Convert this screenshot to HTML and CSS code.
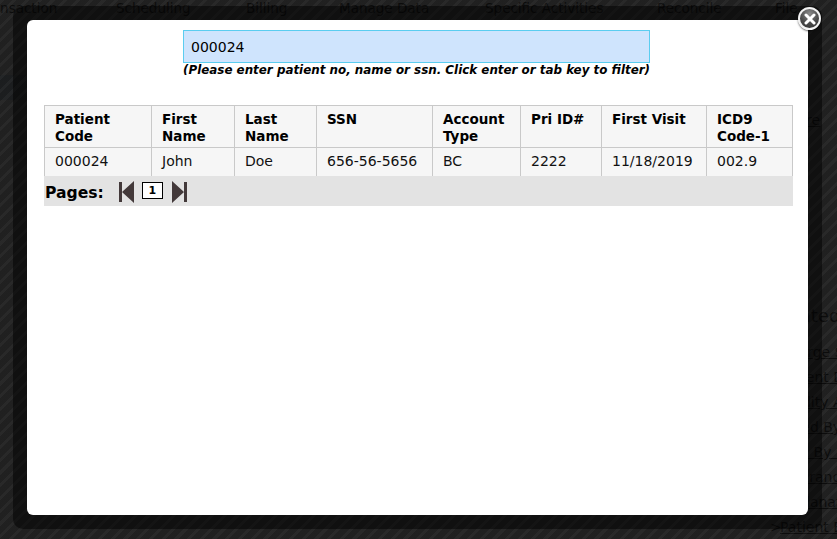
FILE: index.html
```html
<!DOCTYPE html>
<html lang="en">
<head>
<meta charset="utf-8">
<title>Patient search</title>
<link rel="stylesheet" href="styles.css">
</head>
<body>
<div class="page">
  <nav class="topnav">
    <span>Transaction</span><span>Scheduling</span><span>Billing</span><span>Manage Data</span><span>Specific Activities</span><span>Reconcile</span><span>File</span>
  </nav>
  <div class="band"></div>
  <aside class="side">
    <a class="pic">Picture</a>
    <h3>Related</h3>
    <ul>
      <li><a>Charge Summary</a></li>
      <li><a>Patient Details</a></li>
      <li><a>Facility Activity</a></li>
      <li><a>Billed By Date</a></li>
      <li><a>Paid By Date</a></li>
      <li><a>Insurance</a></li>
      <li><a>Explanation</a></li>
      <li><a>Patient Balance</a></li>
    </ul>
  </aside>
</div>
<div class="overlay"></div>
<div class="frame">
  <main class="modal">
    <div class="filter">
      <input class="search" type="text" value="000024">
      <p class="hint">(Please enter patient no, name or ssn. Click enter or tab key to filter)</p>
    </div>
    <table class="grid">
      <colgroup>
        <col class="c1"><col class="c2"><col class="c3"><col class="c4"><col class="c5"><col class="c6"><col class="c7"><col class="c8">
      </colgroup>
      <thead>
        <tr><th>Patient Code</th><th>First Name</th><th>Last Name</th><th>SSN</th><th>Account Type</th><th>Pri ID#</th><th>First Visit</th><th>ICD9 Code-1</th></tr>
      </thead>
      <tbody>
        <tr><td>000024</td><td>John</td><td>Doe</td><td>656-56-5656</td><td>BC</td><td>2222</td><td>11/18/2019</td><td>002.9</td></tr>
      </tbody>
    </table>
    <div class="pager">
      <span class="pages-label">Pages:</span>
      <svg class="arrow" width="15" height="22" viewBox="0 0 15 22"><path d="M0 1h3v20H0zM3 11 15 0v22z"/></svg>
      <span class="pagenum">1</span>
      <svg class="arrow" width="15" height="22" viewBox="0 0 15 22"><path d="M15 1h-3v20h3zM12 11 0 0v22z"/></svg>
    </div>
  </main>
  <button class="close" aria-label="Close">
    <svg width="12" height="12" viewBox="0 0 12 12"><path d="M2 2l8 8M10 2l-8 8"/></svg>
  </button>
</div>
</body>
</html>
```
FILE: styles.css
```css
* { box-sizing: border-box; }
html, body { margin: 0; height: 100%; overflow: hidden; }
body { font-family: "DejaVu Sans", Verdana, sans-serif; background: #fff; position: relative; }

.page { width: 837px; height: 539px; overflow: hidden; position: relative; color: #000; background: #fff; }
.topnav { display: flex; height: 18px; font-size: 13.5px; line-height: 17px; white-space: nowrap; margin-left: -20px; }
.topnav span:nth-child(1) { width: 136px; }
.topnav span:nth-child(2) { width: 130px; }
.topnav span:nth-child(3) { width: 93px; }
.topnav span:nth-child(4) { width: 146px; }
.topnav span:nth-child(5) { width: 172px; }
.topnav span:nth-child(6) { width: 118px; }
.band { height: 25px; margin-top: 57px; width: 27px; background: #c5dcef; }
.side { position: absolute; left: 770px; top: 112px; width: 200px; font-size: 14px; white-space: nowrap; }
.pic { display: block; padding-left: 2px; text-decoration: underline; color: #000; }
.side h3 { margin: 176px 0 12px; padding-left: 2px; font-size: 18px; font-weight: normal; line-height: 24px; }
.side ul { list-style: none; margin: 0; padding: 0; }
.side li { height: 25px; line-height: 25px; padding-left: 10px; position: relative; }
.side li::before { content: ">"; position: absolute; left: 0; }
.side li a { text-decoration: underline; }

.overlay {
  position: absolute; inset: 0;
  background-image: repeating-linear-gradient(135deg, #161616 0 3px, #0d0d0d 3px 9px);
  opacity: .92;
}
.frame {
  position: absolute; left: 13px; top: 6px; width: 809px; height: 523px;
  padding: 14px;
  border-radius: 10px;
  background: rgba(0, 0, 0, .5);
}
.modal { background: #fff; height: 495px; border-radius: 6px; padding: 10px 15px 0 17px; color: #000; }
.filter { width: 467px; margin-left: 139px; }
.search {
  display: block; width: 100%; height: 33px; padding: 0 7px;
  border: 1px solid #5bcdf0; background: #cfe4fd; color: #000;
  font: 14px "DejaVu Sans", Verdana, sans-serif;
  outline: none; border-radius: 0;
}
.hint { margin: 0; font-size: 11.9px; line-height: 15px; font-weight: bold; font-style: italic; white-space: nowrap; }
.grid { margin-top: 27px; width: 749px; table-layout: fixed; border-collapse: collapse; font-size: 14px; line-height: 17px; background: #f6f6f6; }
.c1 { width: 107px; } .c2 { width: 83px; } .c3 { width: 82px; } .c4 { width: 116px; }
.c5 { width: 88px; } .c6 { width: 81px; } .c7 { width: 105px; } .c8 { width: 86px; }
.grid th, .grid td { border: 1px solid #c9c9c9; padding: 0 10px; text-align: left; vertical-align: top; }
.grid th { height: 42px; padding-top: 5px; padding-bottom: 2px; font-weight: bold; font-size: 13.5px; }
.grid td { height: 28px; padding-top: 5px; border-bottom: 0; color: #111; }
.pager { width: 749px; height: 30px; background: #e3e3e3; display: flex; align-items: center; padding-left: 1px; }
.pages-label { font-size: 15.6px; font-weight: bold; margin: 4px 15px 0 0; }
.arrow { fill: #43393a; display: block; margin-top: 2px; }
.pagenum { width: 21px; height: 17px; margin: 0 9px 0 8px; border: 1px solid #000; background: #fff; font-size: 11px; font-weight: bold; line-height: 15px; text-align: center; }

.close {
  position: absolute; right: 1px; top: 1px; width: 23px; height: 23px; padding: 0;
  border: 2px solid #f2f2f2; border-radius: 50%;
  background: radial-gradient(circle at 50% 25%, #8a8a8a, #4a4a4a 55%, #2e2e2e);
  box-shadow: 0 1px 2px rgba(0, 0, 0, .6);
  display: flex; align-items: center; justify-content: center;
}
.close svg { stroke: #fff; stroke-width: 3; fill: none; stroke-linecap: round; display: block; }
```
